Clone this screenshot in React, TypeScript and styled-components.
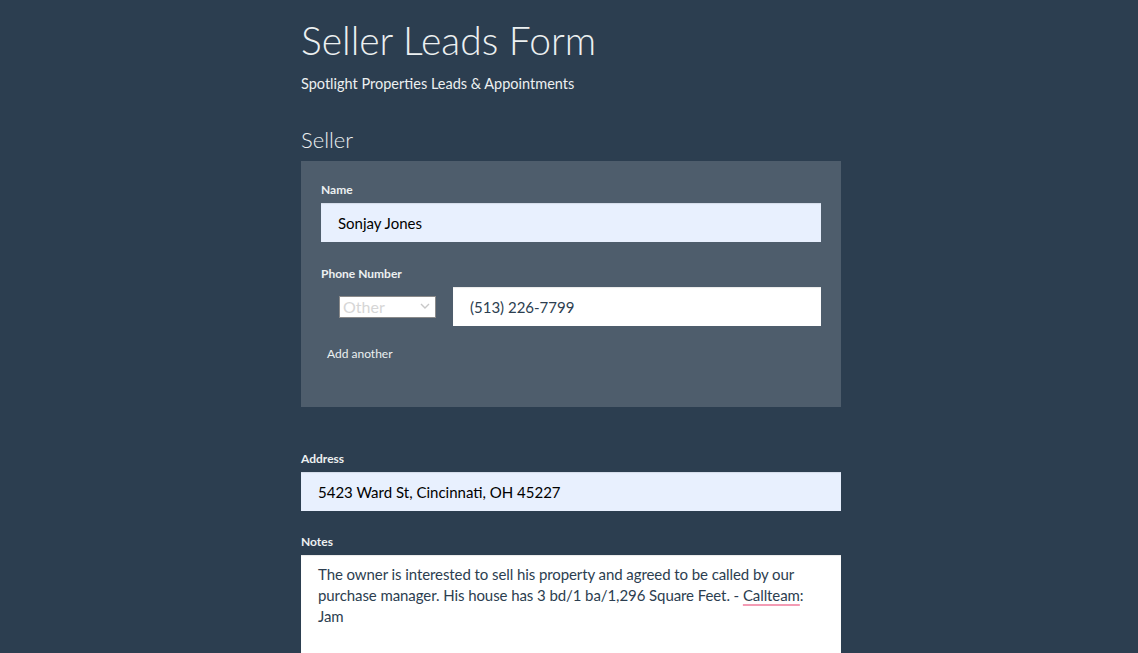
import React from "react";
import styled, { createGlobalStyle } from "styled-components";

const GlobalStyle = createGlobalStyle`
  html, body { margin: 0; padding: 0; }
  body {
    background: #2c3e50;
    font-family: Lato, "Open Sans", sans-serif;
    color: #ecf0f1;
  }
`;

const Page = styled.div`
  width: 540px;
  margin-left: calc(50% - 268px);
  padding-top: 16px;
`;

const Title = styled.h1`
  margin: 0;
  font-size: 39px;
  line-height: 48px;
  font-weight: 300;
  color: #ecf0f1;
`;

const Subtitle = styled.p`
  margin: 10px 0 0;
  font-size: 14.5px;
  line-height: 20px;
  font-weight: 400;
  color: #ecf0f1;
`;

const SectionTitle = styled.h2`
  margin: 33px 0 8px;
  font-size: 22px;
  line-height: 26px;
  font-weight: 300;
  color: #ecf0f1;
`;

const Panel = styled.div`
  background: #4e5d6c;
  padding: 19px 20px 44px;
  display: flex;
  flex-direction: column;
`;

const Field = styled.div<{ $gap?: number }>`
  display: flex;
  flex-direction: column;
  margin-top: ${(p) => p.$gap ?? 0}px;
`;

const Label = styled.label`
  display: block;
  font-size: 12px;
  line-height: 18px;
  font-weight: 700;
  color: #ecf0f1;
  padding-top: 1px;
  margin-bottom: 4px;
`;

const TextInput = styled.input<{ $autofill?: boolean }>`
  box-sizing: border-box;
  width: 100%;
  height: 39px;
  border: none;
  outline: none;
  padding: 0 17px;
  font-family: Lato, "Open Sans", sans-serif;
  font-size: 15px;
  color: ${(p) => (p.$autofill ? "#000" : "#2c3e50")};
  background: ${(p) => (p.$autofill ? "#e8f0fe" : "#fff")};
  box-shadow: inset 0 1px 1px rgba(0, 0, 0, 0.09);
`;

const PhoneRow = styled.div`
  display: flex;
  align-items: center;
`;

const SelectWrap = styled.div`
  position: relative;
  margin-left: 18px;
  margin-right: 17px;
  width: 97px;
  height: 22px;
  flex: none;
`;

const Select = styled.select`
  box-sizing: border-box;
  appearance: none;
  width: 100%;
  height: 100%;
  border: 1px solid #8a8a8a;
  border-radius: 0;
  background: #fff;
  color: #d6d6d6;
  font-family: Lato, "Open Sans", sans-serif;
  font-size: 16px;
  line-height: 20px;
  padding: 0 0 0 3px;
  outline: none;
`;

const Chevron = styled.svg`
  position: absolute;
  right: 6px;
  top: 7px;
  pointer-events: none;
`;

const PhoneInput = styled(TextInput)`
  flex: 1;
  width: auto;
`;

const AddLink = styled.button`
  align-self: flex-start;
  margin: 19px 0 0 6px;
  padding: 0;
  border: none;
  background: none;
  font-family: Lato, "Open Sans", sans-serif;
  font-size: 12px;
  line-height: 18px;
  color: #ecf0f1;
  cursor: pointer;
`;

const Notes = styled.div`
  box-sizing: border-box;
  height: 140px;
  background: #fff;
  padding: 9px 17px 8px;
  font-size: 15px;
  line-height: 21px;
  letter-spacing: -0.08px;
  color: #2c3e50;
  box-shadow: inset 0 1px 1px rgba(0, 0, 0, 0.09);
`;

const Misspelled = styled.span`
  text-decoration: underline;
  text-decoration-color: #f39bb4;
  text-decoration-thickness: 2px;
  text-underline-offset: 3px;
`;

export default function App() {
  return (
    <>
      <GlobalStyle />
      <Page>
        <Title>Seller Leads Form</Title>
        <Subtitle>Spotlight Properties Leads &amp; Appointments</Subtitle>
        <SectionTitle>Seller</SectionTitle>
        <Panel>
          <Field>
            <Label>Name</Label>
            <TextInput $autofill readOnly value="Sonjay Jones" />
          </Field>
          <Field $gap={22}>
            <Label>Phone Number</Label>
            <PhoneRow>
              <SelectWrap>
                <Select defaultValue="other">
                  <option value="other">Other</option>
                </Select>
                <Chevron width="10" height="7" viewBox="0 0 10 7">
                  <path d="M1 1l4 4 4-4" fill="none" stroke="#c8c8c8" strokeWidth="1.4" />
                </Chevron>
              </SelectWrap>
              <PhoneInput readOnly value="(513) 226-7799" />
            </PhoneRow>
          </Field>
          <AddLink type="button">Add another</AddLink>
        </Panel>
        <Field $gap={42}>
          <Label>Address</Label>
          <TextInput $autofill readOnly value="5423 Ward St, Cincinnati, OH 45227" />
        </Field>
        <Field $gap={21}>
          <Label>Notes</Label>
          <Notes>
            The owner is interested to sell his property and agreed to be called by our
            purchase manager. His house has 3 bd/1 ba/1,296 Square Feet. - <Misspelled>Callteam</Misspelled>:
            Jam
          </Notes>
        </Field>
      </Page>
    </>
  );
}
